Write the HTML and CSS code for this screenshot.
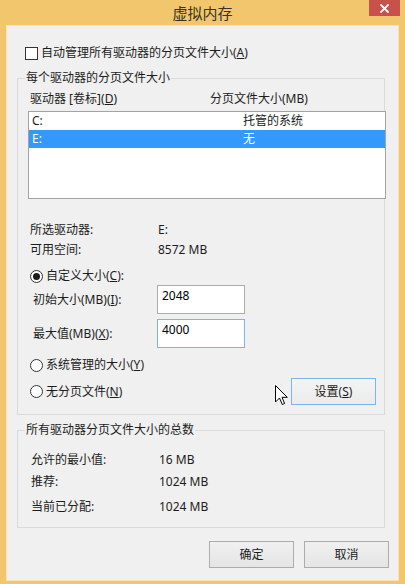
FILE: index.html
```html
<!DOCTYPE html>
<html lang="zh-CN">
<head>
<meta charset="utf-8">
<title>虚拟内存</title>
<link rel="stylesheet" href="styles.css">
</head>
<body>
<div class="window">
  <div class="titlebar">
    <span class="spacer"></span>
    <span class="title">虚拟内存</span>
    <span class="close">
      <svg width="9" height="9" viewBox="0 0 9 9"><path d="M1 1 L8 8 M8 1 L1 8" stroke="#fff" stroke-width="1.8" stroke-linecap="square"/></svg>
    </span>
  </div>
  <div class="client">
    <div class="check-row"><span class="checkbox"></span><span>自动管理所有驱动器的分页文件大小(<u>A</u>)</span></div>

    <fieldset class="group g1">
      <legend>每个驱动器的分页文件大小</legend>
      <div class="cols"><span>驱动器 [卷标](<u>D</u>)</span><span>分页文件大小(MB)</span></div>
      <div class="listbox">
        <div class="item"><span>C:</span><span>托管的系统</span></div>
        <div class="item sel"><span>E:</span><span>无</span></div>
      </div>
      <div class="info">
        <div class="info-row"><span>所选驱动器:</span><span>E:</span></div>
        <div class="info-row"><span>可用空间:</span><span>8572 MB</span></div>
      </div>
      <div class="radio-row r-custom"><span class="radio on"></span><span>自定义大小(<u>C</u>):</span></div>
      <div class="field-row f1"><span class="flabel">初始大小(MB)(<u>I</u>):</span><span class="input">2048</span></div>
      <div class="field-row f2"><span class="flabel">最大值(MB)(<u>X</u>):</span><span class="input focus">4000</span></div>
      <div class="radio-row r-sys"><span class="radio"></span><span>系统管理的大小(<u>Y</u>)</span></div>
      <div class="last-row">
        <div class="radio-inline"><span class="radio"></span><span>无分页文件(<u>N</u>)</span></div>
        <span class="btn btn-set">设置(<u>S</u>)</span>
        <svg class="cursor" width="13" height="21" viewBox="0 0 13 21"><path d="M0.5 0.5 L0.5 17 L4.5 13 L7.3 19.5 L9.6 18.5 L7 12.3 L12.3 12.3 Z" fill="#fff" stroke="#000" stroke-width="1" stroke-linejoin="miter"/></svg>
      </div>
    </fieldset>

    <fieldset class="group g2">
      <legend>所有驱动器分页文件大小的总数</legend>
      <div class="tot-row t1"><span>允许的最小值:</span><span>16 MB</span></div>
      <div class="tot-row t2"><span>推荐:</span><span>1024 MB</span></div>
      <div class="tot-row t3"><span>当前已分配:</span><span>1024 MB</span></div>
    </fieldset>

    <div class="buttons">
      <span class="btn">确定</span>
      <span class="btn">取消</span>
    </div>
  </div>
</div>
</body>
</html>
```

FILE: styles.css
```css
* { box-sizing: border-box; }
html, body { margin: 0; padding: 0; }
body {
  background: #f1c66c;
  font-family: "Noto Sans", "Noto Sans CJK SC", sans-serif;
  font-size: 12px;
  color: #1c1c1c;
}
u { text-decoration: underline; text-underline-offset: 1px; }

.window { width: 405px; height: 584px; background: #f1c66c; }

.titlebar {
  height: 25px;
  display: grid;
  grid-template-columns: 1fr auto 1fr;
}
.title {
  font-family: "Noto Sans CJK SC", sans-serif;
  font-size: 15px;
  line-height: 25px;
  color: #3a3226;
}
.close {
  justify-self: end;
  align-self: start;
  width: 31px;
  height: 16px;
  margin-right: 5px;
  background: #c9514b;
  display: flex;
  align-items: center;
  justify-content: center;
}

.client {
  margin: 0 6px;
  height: 556px;
  background: #f0f0f0;
  padding-top: 20px;
  box-shadow: inset 0 0 0 1px #f7e2b3;
}

.check-row {
  margin-left: 19px;
  height: 16px;
  line-height: 16px;
  display: flex;
  align-items: center;
  gap: 3px;
}
.checkbox {
  width: 13px; height: 13px;
  border: 1px solid #333;
  background: #fff;
}

.group {
  margin: 0 14px 0 11px;
  padding: 0;
  border: 1px solid #dadada;
  min-width: 0;
}
.group legend {
  margin-left: 7px;
  padding: 0 1px;
  line-height: 16px;
  height: 16px;
}
.g1 { margin-top: 9px; padding-bottom: 9px; }
.g2 { margin-top: 7px; padding-bottom: 12px; }

.cols {
  margin-top: 5px;
  height: 16px;
  line-height: 16px;
  padding-left: 12px;
  display: grid;
  grid-template-columns: 180px auto;
}

.listbox {
  margin: 4px 0 0 10px;
  width: 358px;
  height: 88px;
  border: 1px solid #a3a3a3;
  background: #fff;
}
.item {
  height: 18px;
  line-height: 18px;
  padding-left: 3px;
  display: grid;
  grid-template-columns: 211px auto;
}
.item.sel { background: #3399ff; color: #fff; }

.info { margin-top: 21px; }
.info-row {
  height: 20px;
  line-height: 20px;
  padding-left: 12px;
  display: grid;
  grid-template-columns: 128px auto;
}

.radio-row, .radio-inline {
  height: 16px;
  line-height: 16px;
  display: flex;
  align-items: center;
  gap: 3px;
}
.radio-row { padding-left: 12px; }
.r-custom { margin-top: 8px; }
.r-sys { margin-top: 9px; }
.radio {
  width: 13px; height: 13px;
  border: 1px solid #333;
  border-radius: 50%;
  background: #fff;
  display: flex;
  align-items: center;
  justify-content: center;
}
.radio.on::after {
  content: "";
  width: 7px; height: 7px;
  border-radius: 50%;
  background: #1c1c1c;
}

.field-row {
  height: 29px;
  display: grid;
  grid-template-columns: 139px 88px;
  align-items: center;
}
.f1 { margin-top: 1px; }
.f2 { margin-top: 5px; }
.flabel { padding-left: 15px; line-height: 16px; }
.input {
  height: 29px;
  border: 1px solid #acacac;
  background: #fff;
  padding: 2px 4px;
  line-height: 16px;
  color: #000;
}
.input.focus { border-color: #7eb4ea; }

.last-row {
  position: relative;
  margin-top: 5px;
  height: 27px;
  padding: 0 8px 0 12px;
  display: flex;
  align-items: center;
  justify-content: space-between;
}
.cursor { position: absolute; left: 257px; top: 7px; }

.btn {
  width: 85px;
  height: 27px;
  border: 1px solid #acacac;
  background: linear-gradient(#f0f0f0, #e5e5e5);
  display: flex;
  align-items: center;
  justify-content: center;
  line-height: 16px;
}
.btn-set { border-color: #7eb4ea; background: linear-gradient(#f4f4f4, #ebebeb); }

.tot-row {
  height: 16px;
  line-height: 16px;
  padding-left: 13px;
  display: grid;
  grid-template-columns: 128px auto;
}
.t1 { margin-top: 14px; }
.t2 { margin-top: 6px; }
.t3 { margin-top: 9px; }

.buttons {
  margin-top: 13px;
  padding-right: 10px;
  display: flex;
  justify-content: flex-end;
  gap: 10px;
}
```
